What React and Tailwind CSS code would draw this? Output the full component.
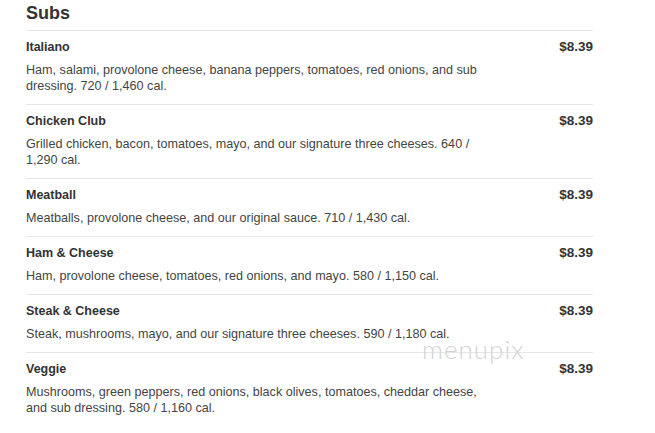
import React from 'react';

const items = [
  {
    name: 'Italiano',
    price: '$8.39',
    desc: 'Ham, salami, provolone cheese, banana peppers, tomatoes, red onions, and sub dressing. 720 / 1,460 cal.',
  },
  {
    name: 'Chicken Club',
    price: '$8.39',
    desc: 'Grilled chicken, bacon, tomatoes, mayo, and our signature three cheeses. 640 / 1,290 cal.',
  },
  {
    name: 'Meatball',
    price: '$8.39',
    desc: 'Meatballs, provolone cheese, and our original sauce. 710 / 1,430 cal.',
  },
  {
    name: 'Ham & Cheese',
    price: '$8.39',
    desc: 'Ham, provolone cheese, tomatoes, red onions, and mayo. 580 / 1,150 cal.',
  },
  {
    name: 'Steak & Cheese',
    price: '$8.39',
    desc: 'Steak, mushrooms, mayo, and our signature three cheeses. 590 / 1,180 cal.',
  },
  {
    name: 'Veggie',
    price: '$8.39',
    desc: 'Mushrooms, green peppers, red onions, black olives, tomatoes, cheddar cheese, and sub dressing. 580 / 1,160 cal.',
  },
];

const MenuItem = ({ item }) => (
  <div className="border-t border-[#e6e6e6] pt-[8px] pb-[10px] flex justify-between">
    <div className="w-[457px]">
      <h3 className="text-[12.5px] leading-[16px] font-bold text-[#333]">{item.name}</h3>
      <p className="mt-[7px] text-[12.6px] leading-[16px] text-[#444]">{item.desc}</p>
    </div>
    <span className="text-[13.5px] leading-[16px] font-bold text-[#333]">{item.price}</span>
  </div>
);

export default function App() {
  return (
    <div
      className="relative w-[655px] h-[433px] bg-white overflow-hidden"
      style={{ fontFamily: '"Liberation Sans", Arial, sans-serif' }}
    >
      <div className="ml-[26px] w-[567px]">
        <h2 className="text-[18px] leading-[26px] font-bold text-[#333] mb-[4px]">Subs</h2>
        {items.map((item) => (
          <MenuItem key={item.name} item={item} />
        ))}
      </div>
      <span
        className="absolute left-[422px] top-[334px] text-[26px] leading-[30px] font-light text-[#d4d4d4] tracking-[1px]"
        style={{ fontFamily: 'Lato, sans-serif' }}
      >
        menupix
      </span>
    </div>
  );
}
